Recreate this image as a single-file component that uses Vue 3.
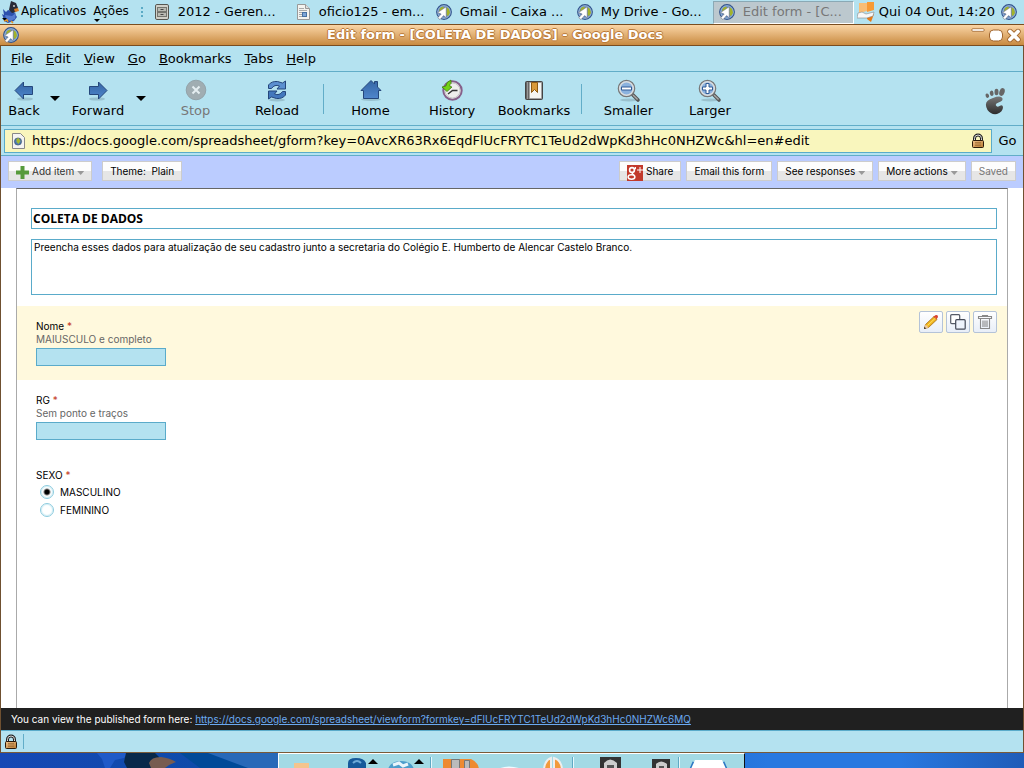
<script setup>
import { ref } from 'vue'

const tasks = [
  { text: '2012 - Geren...', icon: 'drawer' },
  { text: 'oficio125 - em...', icon: 'doc' },
  { text: 'Gmail - Caixa ...', icon: 'globe' },
  { text: 'My Drive - Go...', icon: 'globe' },
  { text: 'Edit form - [C...', icon: 'globe', active: true }
]
const menus = ['File', 'Edit', 'View', 'Go', 'Bookmarks', 'Tabs', 'Help']
const url = ref('https://docs.google.com/spreadsheet/gform?key=0AvcXR63Rx6EqdFlUcFRYTC1TeUd2dWpKd3hHc0NHZWc&hl=en#edit')
const title = ref('COLETA DE DADOS')
const description = ref('Preencha esses dados para atualização de seu cadastro junto a secretaria do Colégio E. Humberto de Alencar Castelo Branco.')
const nome = ref('')
const rg = ref('')
const sexo = ref('MASCULINO')
const formUrl = 'https://docs.google.com/spreadsheet/viewform?formkey=dFlUcFRYTC1TeUd2dWpKd3hHc0NHZWc6MQ'
</script>

<template>
  <div class="desktop">
    <svg class="defs" width="0" height="0" aria-hidden="true">
      <defs>
        <linearGradient id="blue" x1="0" y1="0" x2="0" y2="1">
          <stop offset="0" stop-color="#3465a4" /><stop offset="1" stop-color="#4f86cc" />
        </linearGradient>
        <linearGradient id="gold" x1="0" y1="0" x2="1" y2="1">
          <stop offset="0" stop-color="#eec08a" /><stop offset="1" stop-color="#b87a30" />
        </linearGradient>
        <linearGradient id="foot" x1="0" y1="0" x2="0" y2="1">
          <stop offset="0" stop-color="#777" /><stop offset="1" stop-color="#2c2c2c" />
        </linearGradient>
        <symbol id="globe" viewBox="0 0 16 16">
          <circle cx="8" cy="8" r="7.3" fill="#5f87bd" stroke="#33548c" stroke-width="1.2" />
          <circle cx="8" cy="8" r="6.2" fill="none" stroke="#b3cbe6" stroke-width=".8" />
          <path d="M4 4 7 2.500l1.500 2-2 3-3.500.5zM10.500 3l2.500 2 1 4-2 3-1.500-1z" fill="#a3b32a" />
          <path d="M10.200 2.800v11l-2.600-2.200-3.600 4-2.200-1.800 3.400-3.800-3.600-1.400z" fill="#fff" stroke="#667" stroke-width=".5" />
        </symbol>
        <symbol id="lock" viewBox="0 0 14 16">
          <path d="M3.500 8V5.500a3.500 3.500 0 0 1 7 0V8" fill="none" stroke="#222" stroke-width="3" />
          <path d="M3.500 8V5.500a3.500 3.500 0 0 1 7 0V8" fill="none" stroke="#ddd" stroke-width="1" />
          <rect x="1.500" y="7.500" width="11" height="7" rx="1" fill="url(#gold)" stroke="#2a1a0a" />
          <path d="M4 9.500h6M4 11h6M4 12.500h6" stroke="#996830" stroke-width=".7" />
        </symbol>
        <symbol id="lens" viewBox="0 0 24 24">
          <ellipse cx="12" cy="21" rx="9" ry="1.400" fill="#799aa5" opacity=".45" />
          <path d="m15 15 6 6" stroke="#555" stroke-width="3.600" stroke-linecap="round" />
          <path d="m16 16 4.600 4.600" stroke="#aaa" stroke-width="1.400" />
          <circle cx="9.500" cy="9.500" r="8" fill="#8bb2de" stroke="#777" stroke-width="1.600" />
          <circle cx="9.500" cy="9.500" r="6.800" fill="none" stroke="#d9dde0" stroke-width="1.600" />
        </symbol>
      </defs>
    </svg>

    <nav class="panel" aria-label="Painel">
      <svg class="bird" viewBox="0 0 20 24" aria-hidden="true">
        <path d="m3 9 3 3 2-2 6 2 3 5-3 4-6 2-4-2-1-4-1-3 2 1z" fill="#2c51ad" />
        <path d="m5 15 7 1 4-3-1 6-5 2-4-2z" fill="#547bd0" />
        <path d="M10 5 11 1l5 2 2 5-2 4-4 1-3-3z" fill="#292c38" />
        <path d="m14 9 4-1 1 3-4 1z" fill="#d97d25" />
        <circle cx="14" cy="6" r="1" fill="#ccc" />
        <path d="m4 21 3-1 1 2m3-1 2 2" stroke="#e69422" stroke-width="1.500" fill="none" />
        <path d="M2 18h5l-2.500 2.500z" fill="#000" />
      </svg>
      <button class="pmenu">Aplicativos</button>
      <button class="pmenu acoes">Ações<svg class="tick" width="6" height="3" viewBox="0 0 6 3"><path d="M0 0h6L3 3z" /></svg></button>
      <span class="grip"></span>
      <button v-for="t in tasks" :key="t.text" class="task" :class="{ active: t.active }">
        <svg v-if="t.icon === 'globe'" width="16" height="16"><use href="#globe" /></svg>
        <svg v-else-if="t.icon === 'drawer'" width="16" height="16" viewBox="0 0 16 16">
          <rect x="1.500" y=".5" width="13" height="15" rx="1.400" fill="#d0d0c8" stroke="#555650" />
          <rect x="3.500" y="3.500" width="9" height="4" fill="#b9bab2" stroke="#75766f" /><rect x="3.500" y="8.500" width="9" height="4" fill="#b9bab2" stroke="#75766f" />
          <path d="M6.500 5.500h3M6.500 10.500h3" stroke="#444" />
        </svg>
        <svg v-else width="16" height="16" viewBox="0 0 16 16">
          <path d="M2.500.5h8l4 4v11h-12z" fill="#f3f3f0" stroke="#999" /><path d="M10.500.5v4h4" fill="#ddd" stroke="#999" />
          <path d="M4 4.500h5M4 6.500h8M4 8.500h3M4 10.500h3M4 12.500h3" stroke="#aaa" /><rect x="7.500" y="8.500" width="4" height="4" fill="#7da5d7" stroke="#4871a3" />
        </svg>
        <span>{{ t.text }}</span>
      </button>
      <svg class="tray" width="18" height="20" viewBox="0 0 18 20" aria-hidden="true">
        <path d="M2 1h8v8l-8 2z" fill="#f9bd75" /><path d="M10 0h7v8l-7 2z" fill="#f79a35" />
        <path d="M10 12h7l-3 8-4-3z" fill="#e87b16" />
        <path d="m1 11 4-1 4 2 8-2-1 4-6 2H0z" fill="#f8f8f8" stroke="#888" stroke-width=".6" />
      </svg>
      <time class="clock">Qui 04 Out, 14:20</time>
      <svg width="16" height="16" aria-hidden="true"><use href="#globe" /></svg>
    </nav>

    <main class="window">
      <header class="titlebar">
        <svg width="16" height="16" aria-hidden="true"><use href="#globe" /></svg>
        <h1>Edit form - [COLETA DE DADOS] - Google Docs</h1>
        <div class="wbtns">
          <button aria-label="Minimize"><svg width="14" height="16" viewBox="0 0 14 16"><rect x=".7" y="1.700" width="12.600" height="2.600" rx="1.300" fill="#fff" stroke="#a2662d" stroke-width=".8" /></svg></button>
          <button aria-label="Maximize"><svg width="16" height="16" viewBox="0 0 16 16"><rect x="1.500" y="3" width="13" height="11" rx="4" fill="#fff" stroke="#a2662d" /></svg></button>
          <button aria-label="Close"><svg width="14" height="16" viewBox="0 0 14 16"><path d="m3 4.500 8 8m0-8-8 8" stroke="#a2662d" stroke-width="5.400" stroke-linecap="round" /><path d="m3 4.500 8 8m0-8-8 8" stroke="#fff" stroke-width="3.800" stroke-linecap="round" /></svg></button>
        </div>
      </header>

      <nav class="menubar" aria-label="Menu">
        <button v-for="m in menus" :key="m"><u>{{ m[0] }}</u>{{ m.slice(1) }}</button>
      </nav>

      <div class="toolbar">
        <button class="t-back">
          <svg viewBox="0 0 24 24"><ellipse cx="13" cy="20" rx="8" ry="1.600" fill="#7b9fae" opacity=".5" /><path d="M3 11.500 11.500 3v4.500h9v8h-9V20z" fill="url(#blue)" stroke="#25477c" /></svg>Back</button>
        <button class="arrow" aria-label="Back history"><svg viewBox="0 0 10 5"><path d="M0 0h10L5 5z" /></svg></button>
        <button class="t-fwd">
          <svg viewBox="0 0 24 24"><ellipse cx="11" cy="20" rx="8" ry="1.600" fill="#7b9fae" opacity=".5" /><path d="M21 11.500 12.500 3v4.500h-9v8h9V20z" fill="url(#blue)" stroke="#25477c" /></svg>Forward</button>
        <button class="arrow" aria-label="Forward history"><svg viewBox="0 0 10 5"><path d="M0 0h10L5 5z" /></svg></button>
        <button class="t-stop" disabled>
          <svg viewBox="0 0 24 24"><circle cx="12" cy="11" r="9.800" fill="#a0adb2" stroke="#93a3aa" /><path d="m8.500 7.500 7 7m0-7-7 7" stroke="#e5eef1" stroke-width="2" /></svg>Stop</button>
        <button class="t-reload">
          <svg viewBox="0 0 24 24"><ellipse cx="12" cy="21" rx="8" ry="1.400" fill="#7b9fae" opacity=".5" />
            <path d="M3.500 9.500V6q3-4 9-3.500l5 1.500 3-2v8h-8.500l2.500-3q-5-2-8 2.500z" fill="#5b8fd0" stroke="#25477c" /><path d="M20.500 12.500V16q-3 4-9 3.500l-5-1.500-3 2v-8H12l-2.500 3q5 2 8-2.500z" fill="#4378bd" stroke="#25477c" /></svg>Reload</button>
        <span class="sep"></span>
        <button class="t-home">
          <svg viewBox="0 0 24 24"><ellipse cx="12" cy="20.500" rx="10" ry="1.500" fill="#7b9fae" opacity=".5" /><path d="M4.500 11.500H2L12 1.500l3.500 3.500V2.500h3V8l3.500 3.500h-2.500v8h-15z" fill="url(#blue)" stroke="#25477c" /></svg>Home</button>
        <button class="t-hist">
          <svg viewBox="0 0 24 24"><circle cx="12.500" cy="11.500" r="9.200" fill="#eeeeec" stroke="#86608a" stroke-width="2" /><circle cx="12.500" cy="11.500" r="7.500" fill="none" stroke="#bbb" stroke-width=".8" /><path d="m8 15 4.500-3.500h5" stroke="#333" stroke-width="1.400" fill="none" /><path d="m2 8 4-1q0-4 5-6v3.500q-2 1-1 3l2 .5-5 4.500z" fill="#73d216" stroke="#3e7d12" stroke-width=".8" /></svg>History</button>
        <button class="t-book">
          <svg viewBox="0 0 24 24"><rect x="3.500" y="2.500" width="17" height="18" rx="1" fill="#666" stroke="#444" /><rect x="7.500" y="3.500" width="12" height="16" fill="#f5f5f2" stroke="#999" stroke-width=".6" /><path d="M9.500 3.500h6v10l-3-3-3 3z" fill="#d99a3a" stroke="#8d5a13" /><path d="M5.500 3v17" stroke="#999" /></svg>Bookmarks</button>
        <span class="sep sep2"></span>
        <button class="t-small">
          <svg viewBox="0 0 24 24"><use href="#lens" width="24" height="24" /><path d="M4.500 8h10v3h-10z" fill="#fff" stroke="#315b96" /></svg>Smaller</button>
        <button class="t-large">
          <svg viewBox="0 0 24 24"><use href="#lens" width="24" height="24" /><path d="M8 4.500h3V8h3.500v3H11v3.500H8V11H4.500V8H8z" fill="#fff" stroke="#315b96" /></svg>Larger</button>
        <svg class="gnome" width="22" height="28" viewBox="0 0 22 28" aria-hidden="true">
          <path d="M9 11q8-3 9.500.5.500 3-4 4-3.500 1-2.500 3 1 2 3.500.5 3-2 3.500 1 0 5-6 7-6 1-9.500-4-5-9 5.500-12z" fill="url(#foot)" />
          <ellipse cx="18" cy="5" rx="2.600" ry="4" transform="rotate(18 18 5)" fill="#666" /><ellipse cx="12.500" cy="5" rx="2" ry="3.200" fill="#666" /><ellipse cx="7.600" cy="6.400" rx="1.900" ry="2.700" transform="rotate(-10 7 6)" fill="#666" /><ellipse cx="3.400" cy="8.800" rx="1.700" ry="2.300" transform="rotate(-20 3 9)" fill="#666" />
        </svg>
      </div>

      <form class="location" @submit.prevent>
        <label class="urlbox">
          <svg width="14" height="16" viewBox="0 0 14 16" aria-hidden="true"><path d="M1.500.5h8l4 4v11h-12z" fill="#f4f4f2" stroke="#888" /><circle cx="7" cy="8.500" r="3.600" fill="#4a79b5" stroke="#345" stroke-width=".6" /><path d="m5.500 6 2-1 2 3-2 3-2-2z" fill="#a5b830" /></svg>
          <input v-model="url" type="text" aria-label="Address" />
          <svg width="14" height="16" aria-hidden="true"><use href="#lock" /></svg>
        </label>
        <button>Go</button>
      </form>

      <div class="docbar">
        <button class="gb add"><svg width="13" height="13" viewBox="0 0 13 13"><path d="M4.500 0h4v4.500H13v4H8.500V13h-4V8.500H0v-4h4.500z" fill="#569a3c" /></svg>Add item<i></i></button>
        <button class="gb">Theme:&nbsp; Plain</button>
        <span class="fill"></span>
        <button class="gb share"><svg width="16" height="16" viewBox="0 0 16 16"><path d="M0 0h16v16H0z" fill="#c23a2c" /><path d="M13 2v6M10 5h6" stroke="#fff" /><path d="M9 2.500H8" stroke="#fff" /><circle cx="5" cy="5" r="2.400" fill="none" stroke="#fff" stroke-width="1.600" /><path d="M7 3.500h2M5 7.500q0 1.500 2 2.500" fill="none" stroke="#fff" stroke-width="1.400" /><ellipse cx="4.500" cy="12" rx="3.400" ry="2.200" fill="none" stroke="#fff" stroke-width="1.500" /></svg>Share</button>
        <button class="gb">Email this form</button>
        <button class="gb">See responses<i></i></button>
        <button class="gb">More actions<i></i></button>
        <button class="gb saved" disabled>Saved</button>
      </div>

      <section class="page">
        <div class="sheet">
          <input v-model="title" class="ftitle" type="text" aria-label="Form title" />
          <textarea v-model="description" class="fdesc" aria-label="Form description"></textarea>

          <div class="question selected">
            <label for="nome">Nome <b>*</b></label>
            <p>MAIUSCULO e completo</p>
            <input id="nome" v-model="nome" type="text" />
            <div class="tools">
              <button aria-label="Edit"><svg width="16" height="16" viewBox="0 0 16 16"><path d="m1.500 14.500 1-4 8.500-8 3 3-8.500 8z" fill="#f0b51d" stroke="#a56c16" stroke-width=".8" /><path d="m1.500 14.500 1-4 3 3z" fill="#f0c9a3" /><path d="m1 15 .6-2.200L3 14.400z" fill="#222" /><path d="m10.500 2.800 1.800-1.600q2-.6 2.600.8.500 1.300-.9 2.500l-.7.800z" fill="#d9432f" /><path d="m4.500 11.500 8-7.500" stroke="#ffe066" /></svg></button>
              <button aria-label="Duplicate"><svg width="16" height="16" viewBox="0 0 16 16"><rect x=".7" y=".7" width="9" height="9" rx="1" fill="#fff" stroke="#555a66" stroke-width="1.200" /><rect x="5.700" y="5.700" width="9.500" height="9.500" rx="1" fill="#eef3fb" stroke="#444957" stroke-width="1.200" /></svg></button>
              <button aria-label="Delete"><svg width="16" height="16" viewBox="0 0 16 16"><path d="M1.500 4.500v-2h13v2zM5.500 2.500v-1h5v1M3.500 5v9.500h9V5M6 6.500V13M8 6.500V13M10 6.500V13" fill="none" stroke="#888" stroke-width="1.100" /></svg></button>
            </div>
          </div>

          <div class="question">
            <label for="rg">RG <b>*</b></label>
            <p>Sem ponto e traços</p>
            <input id="rg" v-model="rg" type="text" />
          </div>

          <fieldset class="question">
            <legend>SEXO <b>*</b></legend>
            <label v-for="s in ['MASCULINO', 'FEMININO']" :key="s" class="radio"><input v-model="sexo" type="radio" name="sexo" :value="s" />{{ s }}</label>
          </fieldset>
        </div>
      </section>

      <footer class="published">You can view the published form here: <a :href="formUrl">{{ formUrl }}</a></footer>
      <div class="status"><svg width="14" height="16" aria-hidden="true"><use href="#lock" /></svg><span></span></div>
    </main>

    <div class="wallpaper">
      <svg class="tux" width="278" height="15" viewBox="0 0 278 15" aria-hidden="true">
        <path d="M180 0h98v15h-78z" fill="#004a98" /><path d="M208 0h70v15h-30z" fill="#2869b8" />
        <path d="M97 0h31l-4 5-9 2-5 8h-5l-3-9z" fill="#1f5ac8" /><path d="M126 0h29l4 4v11h-32l-3-6z" fill="#08284a" /><path d="M149 10q2-6 12-6 9 1 15 5-6 2-11 6h-14z" fill="#775c50" />
      </svg>
      <div class="dock">
        <svg width="465" height="15" viewBox="0 0 465 15" aria-hidden="true">
          <path d="M15 15V9h15v5h10v2" fill="#f4c48d" />
          <path d="M69 15V9q0-5 8-5t10 5v6" fill="#15599a" /><path d="M74 9q4-4 8 0" stroke="#6caad8" stroke-width="2" fill="none" />
          <path d="M89 10l5-5 5 5zM135 10l5-5 5 5z" /><path d="M109 15q3-8 13-8 10 0 13 8" fill="#4c9dcb" /><path d="M114 11l6-2 4 3 5-2" stroke="#e8f5fb" stroke-width="3" fill="none" />
          <path d="M151.500 3v12M293.500 3v12M399.500 3v12" stroke="#5fa9c4" /><path d="M152.500 3v12M294.500 3v12M400.500 3v12" stroke="#e8f8fc" />
          <path d="M164 15V5h28q7 3 8 10" fill="#ee8a31" /><path d="M172.500 15V5.500h8V15M185.500 15V6.500h5V15" fill="#bbb" stroke="#777" />
          <path d="M219 15q10-5 24 0" fill="#eefaff" /><path d="M265 15q1-9 7-11v11zM275 15V4q7 2 8 11z" fill="#f29a3b" stroke="#eee" stroke-width="2" />
          <path d="M321 15V3h21v12" fill="#333" /><path d="M325 15V9q6-7 13 0v6" fill="#ccc" /><path d="M328 15v-4h7v4" fill="#555" /><path d="M373 15V5h18v10" fill="#333" /><path d="M377 15v-5q5-5 11 0v5" fill="#ccc" /><path d="M380 15v-3h5v3" fill="#555" />
          <path d="M412 15l3-7M447 15l-3-7" stroke="#2c78c4" stroke-width="3" /><path d="M412 15l4-9h27l4 9" fill="#fff" />
        </svg>
      </div>
    </div>
  </div>
</template>

<style>
body { margin: 0; }
</style>

<style scoped>
* { box-sizing: border-box; }
.desktop { display: flex; flex-direction: column; height: 100vh; min-height: 560px; overflow: hidden; background: #b4e2f0; color: #000; font: 13px/16px "DejaVu Sans", sans-serif; }
button { margin: 0; padding: 0; border: 0; background: none; color: inherit; font: inherit; white-space: nowrap; }
input, textarea { margin: 0; border-radius: 0; outline: 0; font: inherit; color: inherit; }
svg { flex: none; display: block; }
.defs { position: absolute; }

.panel { display: flex; align-items: center; height: 24px; padding-right: 7px; flex: none; }
.bird { width: 20px; height: 24px; }
.pmenu { font-size: 12px; margin-left: 1px; padding-bottom: 2px; }
.acoes { position: relative; margin-left: 7px; }
.tick { position: absolute; left: 1px; bottom: -1px; }
.grip { width: 2px; height: 12px; margin: 2px 6px 0 12px; background: repeating-linear-gradient(#5aaac5 0 2px, transparent 2px 4px); }
.task { display: flex; align-items: center; gap: 8px; flex: 0 0 141px; min-width: 0; height: 23px; padding-left: 5px; overflow: hidden; }
.task.active { background: #bcc8ce; border: 1px solid #8aa9b5; border-right-color: #fff; border-bottom-color: #fff; color: #777; }
.tray { margin: 0 4px 0 3px; }
.clock { flex: 1; white-space: nowrap; }

.window { flex: 1; min-height: 0; display: flex; flex-direction: column; border: 1px solid #6f5030; border-top: 0; border-bottom-color: #7a5a38; }
.titlebar { display: flex; align-items: center; height: 22px; margin: 0 -1px; padding: 0 3px; flex: none; border: 1px solid #7a4d20; border-width: 1px 0; background: linear-gradient(#fad5a6, #c88a40); color: #fff; }
h1 { flex: 1; margin: 0; font: bold 13px/18px "DejaVu Sans", sans-serif; text-align: center; text-shadow: 1px 0 #bb7a38, -1px 0 #bb7a38, 0 1px #bb7a38, 0 -1px #bb7a38; }
.wbtns { display: flex; gap: 3px; }
.menubar { display: flex; gap: 13px; height: 26px; padding: 0 10px; flex: none; border-bottom: 1px solid #62adc8; }

.toolbar { display: flex; align-items: center; height: 54px; flex: none; padding: 0 17px 0 0; border-bottom: 1px solid #62adc8; }
.toolbar button { display: flex; flex-direction: column; align-items: center; line-height: 16px; }
.toolbar button > svg { width: 24px; height: 24px; }
.toolbar .arrow { width: 10px; }
.toolbar .arrow svg { width: 10px; height: 5px; }
.t-back { width: 46px; }
.arrow { margin: 0 3px; }
.t-fwd { width: 70px; }
.t-stop { width: 93px; color: #777; }
.t-reload { width: 70px; }
.sep { width: 1px; height: 30px; background: #62adc8; margin-left: 11px; }
.t-home { width: 93px; }
.t-hist { width: 70px; }
.t-book { width: 94px; }
.sep2 { margin-left: 0; }
.t-small { width: 93px; }
.t-large { width: 70px; }
.gnome { margin: 4px 0 0 auto; }

.location { display: flex; height: 30px; padding: 3px 0 2px 3px; flex: none; border-bottom: 1px solid #62adc8; }
.urlbox { flex: 1; display: flex; align-items: center; gap: 7px; padding: 0 6px; border: 1px solid #5aabca; background: #f9f6bd; }
.urlbox input { flex: 1; min-width: 0; border: 0; padding: 0; background: none; }
.location button { width: 31px; }

.docbar, .page, .published { font-family: "Inter", sans-serif; font-size: 10px; line-height: 12px; }
.docbar { display: flex; align-items: flex-start; gap: 5px; flex: none; height: 32px; padding: 5px 7px; background: #bbccff; }
.gb { display: flex; align-items: center; height: 20px; padding: 0 7px; border: 1px solid #ccc; background: linear-gradient(#fdfdfd 0 50%, #e6e6e6 50% 100%); }
.gb i { width: 7px; height: 4px; margin: 4px 0 0 3px; background: #999; clip-path: polygon(0 0, 100% 0, 50% 100%); }
.add { margin-right: 5px; color: #333; }
.add svg, .share svg { margin: 3px 3px 0 0; }
.saved { color: #777; }
.fill { flex: 1; }

.page { flex: 1; min-height: 0; overflow: hidden; display: flex; background: #fff; padding: 0 15px; }
.sheet { flex: 1; border: 1px solid #aaa; border-top-color: #666; border-bottom: 0; }
.ftitle { display: block; width: calc(100% - 24px); height: 21px; margin: 19px 0 10px 14px; padding: 0 1px; border: 1px solid #5aabca; font: bold 12px/16px "Open Sans", sans-serif; }
.fdesc { display: block; width: calc(100% - 24px); height: 56px; margin: 0 0 11px 14px; padding: 1px 2px; border: 1px solid #5aabca; resize: none; overflow: hidden; }
.question { position: relative; margin: 0; padding: 14px 19px; border: 0; min-width: 0; height: 74px; }
.selected { background: #fff9dd; }
.question > label, legend { display: block; line-height: 12px; padding: 0; }
.question b { color: #c43b1d; font-weight: normal; }
.question p { margin: 1px 0 3px; line-height: 12px; color: #666; }
.question > input { display: block; width: 130px; height: 18px; border: 1px solid #5aabca; background: #b4e2f0; }
.tools { position: absolute; top: 5px; right: 10px; display: flex; gap: 3px; }
.tools button { display: grid; place-items: center; width: 24px; height: 22px; border: 1px solid #b4c3d8; border-radius: 2px; background: linear-gradient(#fff, #e8eef8); }
fieldset.question { padding-top: 2px; }
legend { padding-top: 15px; }
.question > .radio { display: flex; align-items: center; gap: 6px; height: 18px; padding-left: 4px; }
.radio input { appearance: none; width: 14px; height: 14px; border: 1px solid #8ccbde; border-radius: 50%; background: #fff; box-shadow: inset 0 0 1px 1px #d5eff6; }
.radio input:checked { background: radial-gradient(circle, #000 0 2px, #fff 4px); }

.published { flex: none; height: 22px; padding: 0 10px; line-height: 22px; background: #202020; color: #fff; }
.published a { color: #6aa9f0; }
.status { display: flex; align-items: center; gap: 5px; height: 22px; padding: 0 3px; flex: none; border-top: 1px solid #5aabca; }
.status span { width: 1px; height: 15px; background: #62adc8; }

.wallpaper { display: flex; height: 15px; flex: none; overflow: hidden; background: linear-gradient(90deg, #1648b5, #0a4ca5 28%, #2878e0 75%, #2878e0 88%, #1f5cb8); }
.dock { background: #a3dae5; border: 1px solid #fff; border-width: 1px 0 0 1px; border-right: 1px solid #111; }
</style>
